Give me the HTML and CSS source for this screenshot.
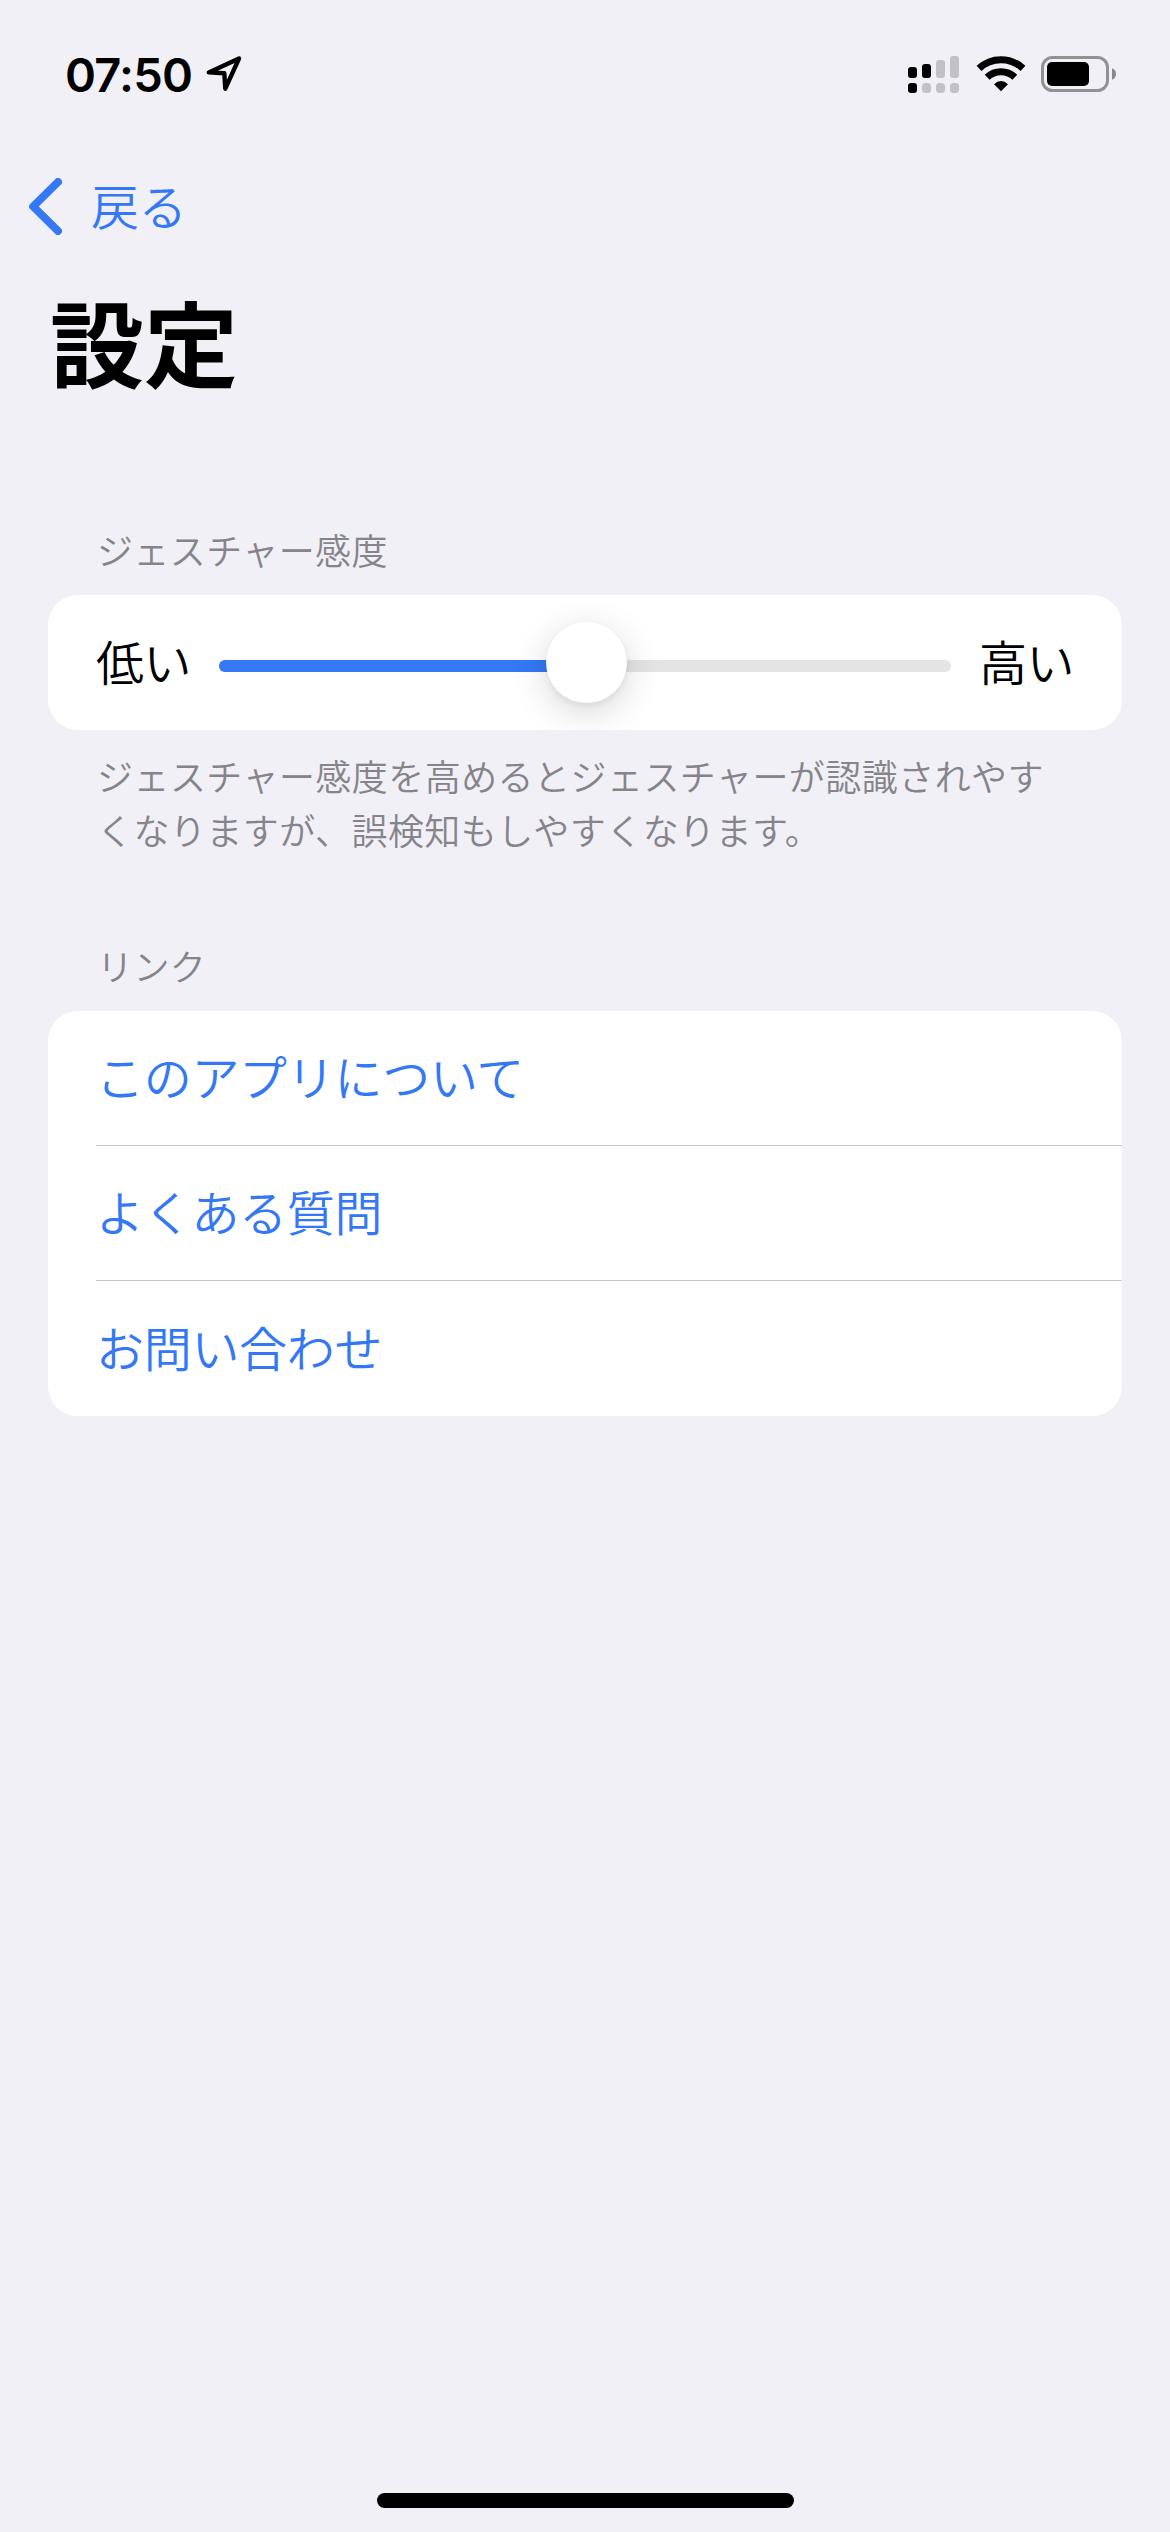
FILE: index.html
```html
<!DOCTYPE html>
<html lang="ja">
<head>
<meta charset="utf-8">
<title>設定</title>
<link rel="stylesheet" href="styles.css">
</head>
<body>
<div class="screen">
  <header class="status-bar">
    <div class="status-left">
      <span class="clock">07:50</span>
      <svg class="location" width="36" height="36" viewBox="0 0 36 36"><path d="M2.8 16.4 L33 2.5 L19.3 32.7 L18.3 17.2 Z" fill="none" stroke="#000" stroke-width="4.4" stroke-linejoin="round"/></svg>
    </div>
    <div class="status-right">
      <svg class="signal" width="51" height="37" viewBox="0 0 51 37">
        <g fill="#000"><rect x="0" y="11" width="9" height="11" rx="3"/><rect x="14" y="8" width="9" height="14" rx="3"/><rect x="0" y="27" width="9" height="10" rx="3"/></g>
        <g fill="#c2c1c6"><rect x="28" y="4" width="9" height="18" rx="3"/><rect x="42" y="0" width="9" height="22" rx="3"/><rect x="14" y="27" width="9" height="10" rx="3.5"/><rect x="28" y="27" width="9" height="10" rx="3.5"/><rect x="42" y="27" width="9" height="10" rx="3.5"/></g>
      </svg>
      <svg class="wifi" width="50" height="37" viewBox="0 0 50 37">
        <g fill="none" stroke="#000" stroke-width="7"><path d="M3 13.4 A32 32 0 0 1 47 13.4"/><path d="M11.2 22.2 A20 20 0 0 1 38.8 22.2"/></g>
        <path d="M18 29.3 Q25 22.9 32 29.3 L25 36.3 Z"/>
      </svg>
      <svg class="battery" width="76" height="36" viewBox="0 0 76 36">
        <rect x="1.5" y="1.5" width="65" height="33" rx="10" fill="none" stroke="#929196" stroke-width="3"/>
        <rect x="6" y="6" width="42" height="24" rx="5"/>
        <path d="M71 12.3 Q75 14 75 18 Q75 22 71 23.7 Z" fill="#88878b"/>
      </svg>
    </div>
  </header>
  <nav class="nav-bar">
    <svg class="chevron" width="34" height="57" viewBox="0 0 34 57"><path d="M29 4 L4.2 28.5 L29 53" fill="none" stroke="#3478f6" stroke-width="8" stroke-linecap="round" stroke-linejoin="round"/></svg>
    <a class="back">戻る</a>
  </nav>
  <h1 class="title">設定</h1>
  <main class="content">
    <section>
      <h2 class="section-title">ジェスチャー感度</h2>
      <div class="card slider-row">
        <span class="slider-label">低い</span>
        <div class="slider"><div class="fill"></div><div class="knob"></div></div>
        <span class="slider-label">高い</span>
      </div>
      <p class="note">ジェスチャー感度を高めるとジェスチャーが認識されやす<br>くなりますが、誤検知もしやすくなります。</p>
    </section>
    <section class="links">
      <h2 class="section-title">リンク</h2>
      <div class="card">
        <a class="link">このアプリについて</a>
        <a class="link">よくある質問</a>
        <a class="link">お問い合わせ</a>
      </div>
    </section>
  </main>
  <div class="home-indicator"></div>
</div>
</body>
</html>
```
FILE: styles.css
```css
* { box-sizing: border-box; }
body { margin: 0; background: #f1f0f6; }
.screen {
  width: 1170px;
  height: 2532px;
  display: flex;
  flex-direction: column;
  background: #f1f0f6;
  color: #000;
  font-family: "Noto Sans CJK JP", sans-serif;
  font-weight: 350;
}
.status-bar {
  height: 141px;
  padding: 0 53px 0 65px;
  display: flex;
  justify-content: space-between;
  align-items: flex-start;
}
.status-left { display: flex; align-items: flex-start; padding-top: 51px; gap: 14px; }
.clock {
  font: 600 47px/48px Inter, sans-serif;
  letter-spacing: -0.8px;
  width: 127px;
  white-space: nowrap;
}
.location { margin-top: 5px; }
.status-right { display: flex; align-items: flex-start; padding-top: 56px; }
.wifi { margin: -1px 15px 0 17px; }
.nav-bar { height: 132px; padding: 0 29px; display: flex; align-items: center; }
.chevron { margin: -1px 28px 0 0; }
.back { padding-bottom: 6px; font-size: 48px; line-height: 60px; letter-spacing: -0.2px; color: #3478f6; }
.title { margin: -5px 0 5px 50px; font-size: 94px; line-height: 144px; font-weight: 700; }
.content { padding: 105px 48px 0; flex: 1; }
.section-title {
  margin: 0 0 18px;
  padding-left: 49px;
  font-size: 36px;
  line-height: 55px;
  font-weight: 350;
  letter-spacing: 0.4px;
  color: #85848a;
}
.card { border-radius: 30px; background: #fff; overflow: hidden; }
.slider-row { height: 135px; padding: 0 48px; display: flex; align-items: center; justify-content: space-between; font-size: 48px; letter-spacing: -0.5px; }
.slider-label { padding-bottom: 6px; }
.slider { position: relative; width: 732px; height: 12px; margin-top: 7px; border-radius: 6px; background: #e4e4e4; }
.fill { width: 50%; height: 12px; border-radius: 6px 0 0 6px; background: #3478f6; }
.knob {
  position: absolute;
  left: 327px;
  top: -38px;
  width: 81px;
  height: 81px;
  border-radius: 50%;
  background: #fff;
  box-shadow: 0 9px 36px rgba(0, 0, 0, 0.16), 0 3px 6px rgba(0, 0, 0, 0.06);
}
.note { margin: 18px 0 0; padding-left: 49px; font-size: 36px; line-height: 54px; letter-spacing: 0.45px; color: #85848a; white-space: nowrap; }
.links { margin-top: 82px; }
.link {
  display: flex;
  align-items: center;
  height: 135px;
  margin-left: 48px;
  padding-bottom: 6px;
  font-size: 48px;
  letter-spacing: -0.3px;
  color: #3478f6;
}
.link:not(:last-child) { border-bottom: 1px solid #c6c6c8; }
.home-indicator { width: 417px; height: 15px; margin: 0 auto 24px; border-radius: 8px; background: #000; }
```
